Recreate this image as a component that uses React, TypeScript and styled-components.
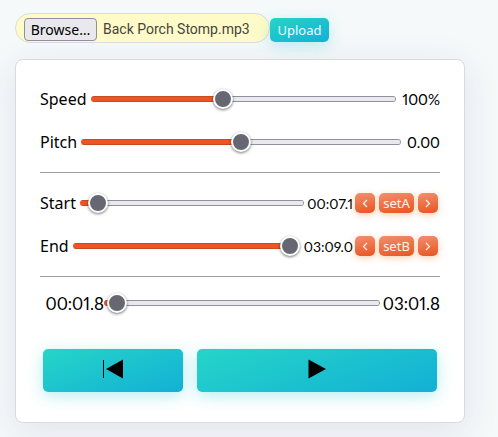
import React, { useState } from 'react';
import styled, { createGlobalStyle } from 'styled-components';

const GlobalStyle = createGlobalStyle`
  * { box-sizing: border-box; }
  html { min-height: 100%; background: #f5f9fa; }
  body { margin: 0; color: #000; font-family: 'Noto Sans', sans-serif; font-size: 16px; }
  button, input { font: inherit; }
`;

const Page = styled.main`
  padding: 13px 33px 14px 15px;
`;

const UploadForm = styled.form`
  display: flex;
  align-items: center;
  margin-bottom: 16px;
`;

const FilePicker = styled.label`
  display: flex;
  align-items: center;
  gap: 6px;
  width: 255px;
  height: 30px;
  padding: 2px 8px 0;
  border: 1px solid #d9dbdd;
  border-radius: 15px;
  background: #fffbc8;
  color: #45453f;
  font-family: Roboto, sans-serif;
  font-size: 14px;
  white-space: nowrap;
  cursor: pointer;
`;

const HiddenFile = styled.input`
  position: absolute;
  width: 1px;
  height: 1px;
  opacity: 0;
`;

const BrowseFace = styled.span`
  display: flex;
  align-items: center;
  justify-content: center;
  width: 73px;
  height: 23px;
  border: 1px solid #8f8f9d;
  border-radius: 4px;
  background: #e9e9ed;
  color: #000;
  font-family: 'Noto Sans', sans-serif;
`;

const UploadButton = styled.button`
  width: 59px;
  height: 24px;
  margin-top: 4px;
  padding: 0;
  border: 0;
  border-radius: 5px;
  background: linear-gradient(160deg, #26d5c7, #12b0d6);
  box-shadow: 0 4px 16px rgba(30, 200, 210, 0.28);
  color: #effcff;
  font-size: 13px;
  cursor: pointer;
`;

const Card = styled.section`
  padding: 24px 24px 30px;
  border: 1px solid #d9d9de;
  border-radius: 8px;
  background: #fff;
  box-shadow: 0 8px 36px rgba(70, 50, 110, 0.11);
`;

const Rows = styled.div`
  display: grid;
  gap: 13px;
`;

const Row = styled.div`
  display: flex;
  align-items: center;
  height: 30px;
`;

const Label = styled.label`
  margin-right: 4px;
`;

const Value = styled.output<{ $width: number; $size?: number }>`
  flex: none;
  width: ${(p) => p.$width}px;
  font-family: Lato, sans-serif;
  font-size: ${(p) => p.$size ?? 15}px;
  font-variant-numeric: proportional-nums;
  text-align: right;
`;

const Divider = styled.hr`
  height: 1px;
  margin: 15px 0;
  border: 0;
  background: #a0a0a0;
`;

const Range = styled.input`
  flex: 1;
  min-width: 0;
  height: 20px;
  margin: 0;
  appearance: none;
  background: transparent;
  cursor: pointer;

  &::-webkit-slider-runnable-track {
    height: 6px;
    border-radius: 3px;
    background:
      linear-gradient(#c84a20 0 1px, #ee5522 1px 5px, #c84a20 5px) 0 0 / var(--fill) 100% no-repeat,
      linear-gradient(#8f8f9d 0 1px, #e9e9ed 1px 5px, #8f8f9d 5px);
    box-shadow: inset -1px 0 0 #8f8f9d;
  }
  &::-webkit-slider-thumb {
    appearance: none;
    width: 20px;
    height: 20px;
    margin-top: -7px;
    border: 2px solid #fff;
    border-radius: 50%;
    background: #676774;
    box-shadow: 0 1px 3px rgba(0, 0, 0, 0.55);
  }
`;

const StepGroup = styled.div`
  display: flex;
  gap: 4px;
  margin: 0 2px;
`;

const StepButton = styled.button<{ $wide?: boolean }>`
  display: flex;
  align-items: center;
  justify-content: center;
  width: ${(p) => (p.$wide ? 35 : 20)}px;
  height: 20px;
  padding: 0;
  border: 0;
  border-radius: 5px;
  background: linear-gradient(170deg, #f09070, #e95420);
  box-shadow: 0 2px 7px rgba(240, 140, 60, 0.4);
  color: #fff4ef;
  font-size: 13px;
  line-height: 20px;
  cursor: pointer;
`;

const Playback = styled(Row)`
  margin: -4px 0 31px;
`;

const Transport = styled.div`
  display: grid;
  grid-template-columns: 7fr 12fr;
  gap: 14px;
  padding: 0 3px;
`;

const TransportButton = styled.button`
  display: flex;
  align-items: center;
  justify-content: center;
  height: 43px;
  padding: 0 0 3px;
  border: 0;
  border-radius: 5px;
  background: linear-gradient(160deg, #26d5c7, #12b0d6);
  box-shadow: 0 4px 16px rgba(30, 200, 210, 0.32);
  color: #000;
  cursor: pointer;
`;

type SliderProps = { id?: string; name: string; min?: number; max: number; initial: number; step?: number };

function Slider({ id, name, min = 0, max, initial, step = 0.1 }: SliderProps) {
  const [value, setValue] = useState(initial);
  const ratio = (value - min) / (max - min);
  const fill = { '--fill': `calc(10px + (100% - 20px) * ${ratio})` } as React.CSSProperties;
  return (
    <Range
      type="range"
      id={id}
      aria-label={name}
      min={min}
      max={max}
      step={step}
      value={value}
      style={fill}
      onChange={(e) => setValue(Number(e.target.value))}
    />
  );
}

function Chevron({ forward = false }: { forward?: boolean }) {
  return (
    <svg width="6" height="9" viewBox="0 0 6 9" fill="none" stroke="currentColor" strokeWidth="1.2" aria-hidden="true">
      <path d={forward ? 'M1 1 4.5 4.5 1 8' : 'M5 1 1.5 4.5 5 8'} />
    </svg>
  );
}

function PointControls({ point }: { point: string }) {
  return (
    <StepGroup>
      <StepButton type="button" aria-label={`Move ${point} back`}><Chevron /></StepButton>
      <StepButton type="button" $wide>set{point}</StepButton>
      <StepButton type="button" aria-label={`Move ${point} forward`}><Chevron forward /></StepButton>
    </StepGroup>
  );
}

export default function App() {
  const [fileName, setFileName] = useState('Back Porch Stomp.mp3');
  return (
    <>
      <GlobalStyle />
      <Page>
        <UploadForm onSubmit={(e) => e.preventDefault()}>
          <FilePicker>
            <HiddenFile
              type="file"
              accept="audio/*"
              onChange={(e) => setFileName(e.target.files?.[0]?.name ?? fileName)}
            />
            <BrowseFace>Browse…</BrowseFace>
            {fileName}
          </FilePicker>
          <UploadButton type="submit">Upload</UploadButton>
        </UploadForm>
        <Card>
          <Rows>
            <Row>
              <Label htmlFor="speed">Speed</Label>
              <Slider id="speed" name="Speed" min={25} max={200} initial={100} step={1} />
              <Value $width={44}>100%</Value>
            </Row>
            <Row>
              <Label htmlFor="pitch">Pitch</Label>
              <Slider id="pitch" name="Pitch" min={-12} max={12} initial={0} />
              <Value $width={39}>0.00</Value>
            </Row>
          </Rows>
          <Divider />
          <Rows>
            <Row>
              <Label htmlFor="start">Start</Label>
              <Slider id="start" name="Start" max={189} initial={7.1} />
              <Value $width={49} $size={14}>00:07.1</Value>
              <PointControls point="A" />
            </Row>
            <Row>
              <Label htmlFor="end">End</Label>
              <Slider id="end" name="End" max={189} initial={189} />
              <Value $width={53} $size={14}>03:09.0</Value>
              <PointControls point="B" />
            </Row>
          </Rows>
          <Divider />
          <Playback>
            <Value $width={64} $size={17}>00:01.8</Value>
            <Slider name="Playback position" max={181.8} initial={1.8} />
            <Value $width={60} $size={17}>03:01.8</Value>
          </Playback>
          <Transport>
            <TransportButton type="button" aria-label="Back to start">
              <svg width="20" height="20" viewBox="0 0 20 20" fill="currentColor" aria-hidden="true">
                <path d="M0 1h1v18H0zM3 10 20 .5v19z" />
              </svg>
            </TransportButton>
            <TransportButton type="button" aria-label="Play">
              <svg width="18" height="20" viewBox="0 0 18 20" fill="currentColor" aria-hidden="true">
                <path d="M.5.5 18 10 .5 19.5z" />
              </svg>
            </TransportButton>
          </Transport>
        </Card>
      </Page>
    </>
  );
}
